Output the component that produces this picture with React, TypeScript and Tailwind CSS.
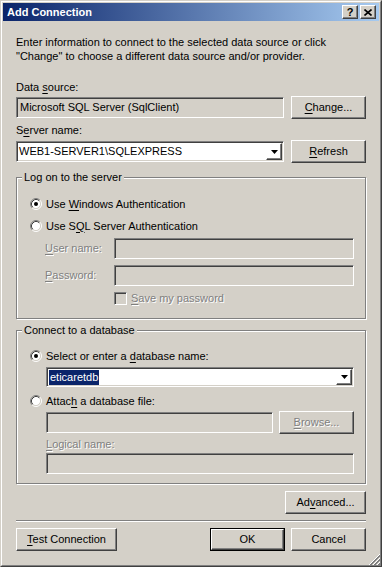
import React from 'react';

const sunken =
    'border border-t-[#808080] border-l-[#808080] border-b-white border-r-white shadow-[inset_1px_1px_0_#404040,inset_-1px_-1px_0_#d4d0c8]';
const raised =
    'border border-t-white border-l-white border-b-[#404040] border-r-[#404040] shadow-[inset_-1px_-1px_0_#808080]';
const etched = 'border border-[#808080] shadow-[inset_1px_1px_0_#ffffff,1px_1px_0_#ffffff]';
const dim = 'text-[#808080] [text-shadow:1px_1px_0_#ffffff]';

const U = ({ children }: { children: React.ReactNode }) => (
    <span className="underline decoration-1 underline-offset-[2px]">{children}</span>
);

const Radio = ({ checked }: { checked?: boolean }) => (
    <svg width="12" height="12" viewBox="0 0 12 12" className="shrink-0">
        <circle cx="6" cy="6" r="4.5" fill="#ffffff" />
        <path d="M9.89 2.11A5.5 5.5 0 0 0 2.11 9.89" fill="none" stroke="#808080" />
        <path d="M2.11 9.89A5.5 5.5 0 0 0 9.89 2.11" fill="none" stroke="#ffffff" />
        <path d="M9.18 2.82A4.5 4.5 0 0 0 2.82 9.18" fill="none" stroke="#404040" />
        <path d="M2.82 9.18A4.5 4.5 0 0 0 9.18 2.82" fill="none" stroke="#d4d0c8" />
        {checked && <circle cx="6" cy="6" r="2" fill="#000000" />}
    </svg>
);

const Arrow = () => (
    <svg width="7" height="4" viewBox="0 0 7 4">
        <polygon points="0,0 7,0 3.5,4" fill="#000000" />
    </svg>
);

const Button = ({ children, className = '', disabled }: { children: React.ReactNode; className?: string; disabled?: boolean }) => (
    <div className={`${raised} h-[23px] flex items-center justify-center bg-[#d4d0c8] ${disabled ? dim : ''} ${className}`}>
        {children}
    </div>
);

const TitleBtn = ({ children, className = '' }: { children: React.ReactNode; className?: string }) => (
    <div className={`${raised} w-[16px] h-[14px] bg-[#d4d0c8] flex items-center justify-center ${className}`}>
        {children}
    </div>
);

const Legend = ({ children }: { children: React.ReactNode }) => (
    <span className="absolute -top-[7px] left-[5px] px-[2px] bg-[#d4d0c8] leading-[13px]">{children}</span>
);

export default function App() {
    return (
        <div className="w-[382px] h-[567px] bg-[#d4d0c8] border border-t-[#d4d0c8] border-l-[#d4d0c8] border-r-[#404040] border-b-[#404040] font-['Liberation_Sans',Arial,sans-serif] text-[11px] leading-[13px] text-black">
            <div className="relative h-full border border-t-white border-l-white border-r-[#808080] border-b-[#808080] p-px flex flex-col">
                {/* Title bar */}
                <div className="h-[18px] shrink-0 flex items-center pl-[4px] pr-[3px] bg-[linear-gradient(to_right,#0a246a,#a6caf0)]">
                    <span className="flex-1 font-bold text-white">Add Connection</span>
                    <TitleBtn>
                        <span className="font-bold text-[11px] leading-none">?</span>
                    </TitleBtn>
                    <TitleBtn className="ml-[2px]">
                        <svg width="8" height="7" viewBox="0 0 8 7">
                            <path d="M0.5 0.5L7.5 6.5M7.5 0.5L0.5 6.5" stroke="#000" strokeWidth="1.6" />
                        </svg>
                    </TitleBtn>
                </div>

                <div className="px-[13px] flex flex-col">
                    <p className="mt-[14px] leading-[14px]">
                        Enter information to connect to the selected data source or click
                        <br />
                        "Change" to choose a different data source and/or provider.
                    </p>

                    {/* Data source */}
                    <div className="mt-[18px]">
                        Data <U>s</U>ource:
                    </div>
                    <div className="mt-[2px] flex items-center gap-[7px]">
                        <div className={`${sunken} flex-1 h-[21px] flex items-center px-[3px]`}>
                            Microsoft SQL Server (SqlClient)
                        </div>
                        <Button className="w-[75px]">
                            <span>
                                <U>C</U>hange...
                            </span>
                        </Button>
                    </div>

                    {/* Server name */}
                    <div className="mt-[5px]">
                        S<U>e</U>rver name:
                    </div>
                    <div className="mt-[3px] flex items-center gap-[7px]">
                        <div className={`${sunken} flex-1 h-[21px] bg-white flex items-stretch p-px`}>
                            <span className="flex-1 flex items-center pl-[1px]">WEB1-SERVER1\SQLEXPRESS</span>
                            <div className={`${raised} w-[16px] flex items-center justify-center`}>
                                <Arrow />
                            </div>
                        </div>
                        <Button className="w-[75px]">
                            <span>
                                <U>R</U>efresh
                            </span>
                        </Button>
                    </div>

                    {/* Log on group */}
                    <div className={`relative mt-[14px] ${etched} pl-[13px] pr-[11px] pb-[13px]`}>
                        <Legend>Log on to the server</Legend>
                        <div className="mt-[18px] h-[16px] flex items-center gap-[4px]">
                            <Radio checked />
                            <span>
                                Use <U>W</U>indows Authentication
                            </span>
                        </div>
                        <div className="mt-[6px] h-[16px] flex items-center gap-[4px]">
                            <Radio />
                            <span>
                                Use S<U>Q</U>L Server Authentication
                            </span>
                        </div>
                        <div className="mt-[4px] ml-[15px] flex items-center">
                            <span className={`w-[69px] ${dim}`}>
                                <U>U</U>ser name:
                            </span>
                            <div className={`${sunken} flex-1 h-[21px]`} />
                        </div>
                        <div className="mt-[6px] ml-[15px] flex items-center">
                            <span className={`w-[69px] ${dim}`}>
                                <U>P</U>assword:
                            </span>
                            <div className={`${sunken} flex-1 h-[21px]`} />
                        </div>
                        <div className="mt-[5px] ml-[84px] h-[14px] flex items-center gap-[4px]">
                            <div className={`${sunken} w-[13px] h-[13px]`} />
                            <span className={dim}>
                                <U>S</U>ave my password
                            </span>
                        </div>
                    </div>

                    {/* Connect to a database group */}
                    <div className={`relative mt-[11px] ${etched} pl-[13px] pr-[11px] pb-[9px]`}>
                        <Legend>Connect to a database</Legend>
                        <div className="mt-[17px] h-[16px] flex items-center gap-[4px]">
                            <Radio checked />
                            <span>
                                Select or enter a <U>d</U>atabase name:
                            </span>
                        </div>
                        <div className={`mt-[3px] ml-[16px] ${sunken} h-[20px] bg-white flex items-stretch p-px`}>
                            <span className="flex-1 flex items-center pl-[1px]">
                                <span className="bg-[#0a246a] text-white px-px leading-[15px]">eticaretdb</span>
                            </span>
                            <div className={`${raised} w-[16px] flex items-center justify-center`}>
                                <Arrow />
                            </div>
                        </div>
                        <div className="mt-[6px] h-[16px] flex items-center gap-[4px]">
                            <Radio />
                            <span>
                                Attac<U>h</U> a database file:
                            </span>
                        </div>
                        <div className="mt-[2px] ml-[16px] flex items-center gap-[6px]">
                            <div className={`${sunken} flex-1 h-[21px]`} />
                            <Button className="w-[75px]" disabled>
                                <span>
                                    <U>B</U>rowse...
                                </span>
                            </Button>
                        </div>
                        <div className={`mt-[4px] ml-[16px] ${dim}`}>
                            <U>L</U>ogical name:
                        </div>
                        <div className={`mt-[2px] ml-[16px] ${sunken} h-[21px]`} />
                    </div>

                    <Button className="mt-[7px] self-end w-[81px]">
                        <span>
                            Ad<U>v</U>anced...
                        </span>
                    </Button>

                    <div className="mt-[6px] h-[2px] border-t border-t-[#808080] border-b border-b-white" />

                    <div className="mt-[6px] flex items-center">
                        <Button className="w-[101px]">
                            <span>
                                <U>T</U>est Connection
                            </span>
                        </Button>
                        <div className="flex-1" />
                        <div className="w-[75px] h-[23px] border border-black flex">
                            <div className={`${raised} flex-1 flex items-center justify-center`}>OK</div>
                        </div>
                        <Button className="ml-[6px] w-[75px]">Cancel</Button>
                    </div>
                </div>

                {/* Resize grip */}
                <svg width="12" height="12" viewBox="0 0 12 12" className="absolute right-0 bottom-0">
                    <path d="M12 1L1 12M12 5L5 12M12 9L9 12" stroke="#ffffff" />
                    <path d="M12 2L2 12M12 3L3 12M12 6L6 12M12 7L7 12M12 10L10 12M12 11L11 12" stroke="#808080" />
                </svg>
            </div>
        </div>
    );
}
